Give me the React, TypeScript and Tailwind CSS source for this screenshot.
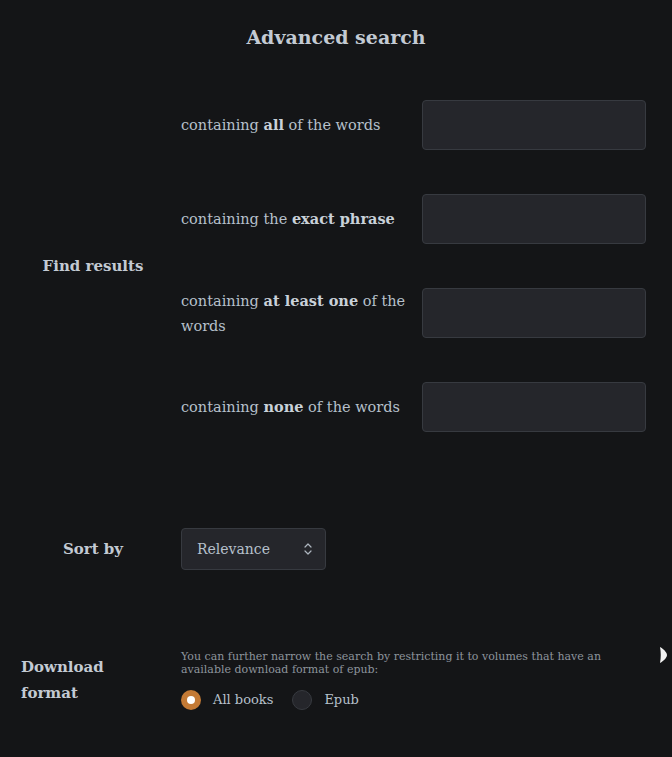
import { useState } from 'react';

const rows = [
  { before: 'containing ', bold: 'all', after: ' of the words' },
  { before: 'containing the ', bold: 'exact phrase', after: '' },
  { before: 'containing ', bold: 'at least one', after: ' of the words' },
  { before: 'containing ', bold: 'none', after: ' of the words' },
];

const serif = { fontFamily: '"DejaVu Serif", "Liberation Serif", serif' };

export default function App() {
  const [format, setFormat] = useState('all');

  return (
    <div className="relative min-h-[757px] w-full bg-[#141517] text-[#b6c0cb]" style={serif}>
      {/* Title */}
      <h1 className="pt-[24px] text-center text-[19px] font-bold leading-[26px] text-[#c3cad3]">
        Advanced search
      </h1>

      {/* Find results */}
      <div className="mt-[50px] flex">
        <div className="flex w-[165px] shrink-0 items-center justify-center pl-[21px]">
          <span className="text-[15px] font-bold text-[#c3cad3]">Find results</span>
        </div>
        <div className="ml-[16px] flex flex-col gap-[44px]">
          {rows.map((r) => (
            <div key={r.bold} className="flex h-[50px] items-center">
              <div className="w-[225px] text-[14.5px] leading-[25px]">
                {r.before}
                <b className="font-bold text-[#c9d1d9]">{r.bold}</b>
                {r.after}
              </div>
              <input
                className="ml-[16px] h-[50px] w-[224px] rounded-[4px] border border-[#373a40] bg-[#25262b] px-3 text-[14px] text-[#c1c2c5] outline-none"
                type="text"
              />
            </div>
          ))}
        </div>
      </div>

      {/* Sort by */}
      <div className="mt-[96px] flex">
        <div className="flex w-[165px] shrink-0 items-center justify-center pl-[21px]">
          <span className="text-[15px] font-bold text-[#c3cad3]">Sort by</span>
        </div>
        <div className="ml-[16px]">
          <div className="flex h-[42px] w-[145px] items-center justify-between rounded-[4px] border border-[#373a40] bg-[#25262b] pl-[15px] pr-[12px]">
            <span className="text-[14px]">Relevance</span>
            <svg width="10" height="14" viewBox="0 0 10 14" fill="none" stroke="#aeb6bf" strokeWidth="1.2" strokeLinecap="round" strokeLinejoin="round">
              <path d="M2 5 L5 2 L8 5" />
              <path d="M2 9 L5 12 L8 9" />
            </svg>
          </div>
        </div>
      </div>

      {/* Download format */}
      <div className="mt-[80px] flex">
        <div className="flex w-[165px] shrink-0 items-center justify-start pl-[21px]">
          <span className="w-[110px] text-[15px] font-bold leading-[26px] text-[#c3cad3]">Download format</span>
        </div>
        <div className="ml-[16px] w-[440px]">
          <p className="text-[11px] leading-[13px] text-[#8d949c]">
            You can further narrow the search by restricting it to volumes that have an available download format of epub:
          </p>
          <div className="mt-[14px] flex items-center gap-[19px]">
            {[
              { id: 'all', label: 'All books' },
              { id: 'epub', label: 'Epub' },
            ].map((o) => (
              <label key={o.id} className="flex cursor-pointer items-center gap-[12px]" onClick={() => setFormat(o.id)}>
                <span
                  className={
                    format === o.id
                      ? 'flex h-[20px] w-[20px] items-center justify-center rounded-full bg-[#c47a35]'
                      : 'flex h-[20px] w-[20px] items-center justify-center rounded-full border border-[#373a40] bg-[#25262b]'
                  }
                >
                  {format === o.id && <span className="h-[8px] w-[8px] rounded-full bg-white" />}
                </span>
                <span className="text-[13px]">{o.label}</span>
              </label>
            ))}
          </div>
        </div>
      </div>

      {/* stray cursor mark on the right edge */}
      <svg className="absolute left-[660px] top-[647px]" width="7" height="16" viewBox="0 0 7 16">
        <path d="M0 0 C5 3 7 6 7 8 C7 10 5 13 0 16 C1 11 1 5 0 0 Z" fill="#f2f2f2" />
      </svg>
    </div>
  );
}
